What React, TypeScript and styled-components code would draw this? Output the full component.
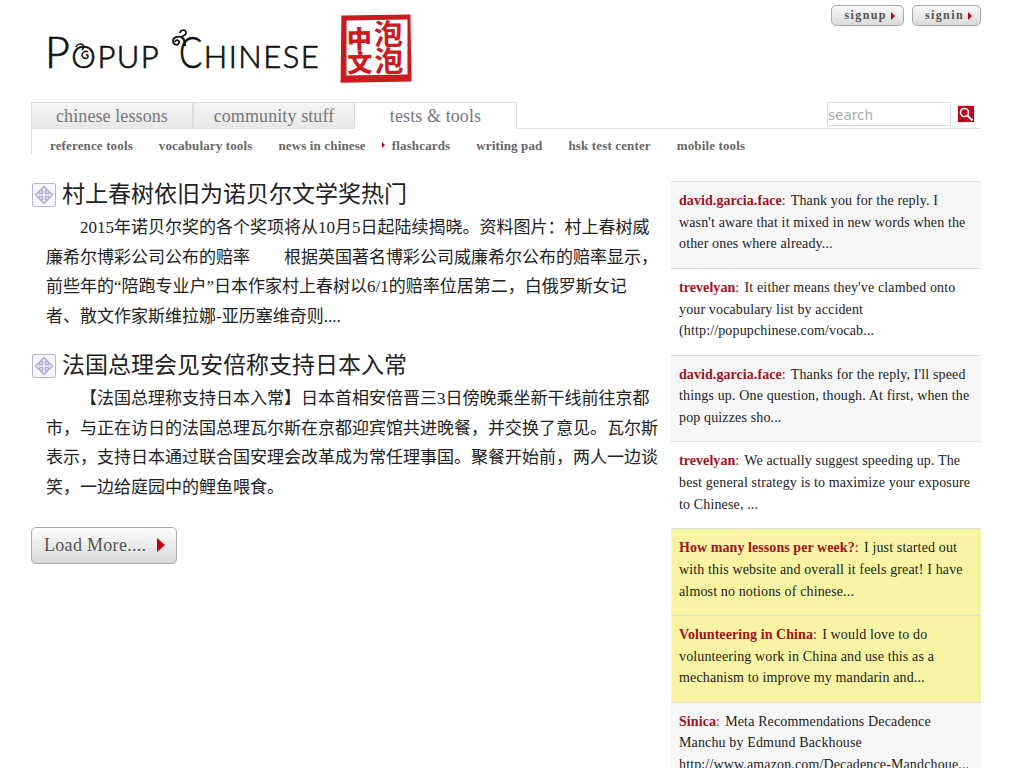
import React from "react";
import styled, { createGlobalStyle } from "styled-components";

const serif = `"Liberation Serif", "Noto Sans CJK SC", serif`;

const Global = createGlobalStyle`
  html, body { margin: 0; padding: 0; background: #fff; }
  body { font-family: ${serif}; color: #222; }
  * { box-sizing: border-box; }
  a { text-decoration: none; color: inherit; }
`;

const Page = styled.div`
  width: 950px;
  margin-left: 31px;
`;

const Header = styled.header`
  height: 102px;
  display: flex;
  justify-content: space-between;
  align-items: flex-start;
`;

const Logo = styled.div`
  display: flex;
  align-items: flex-start;
  padding: 14px 0 0 14px;
`;

const Wordmark = styled.div`
  position: relative;
  width: 295px;
  height: 68px;
  padding-top: 18px;
  font-family: "Lato", "Liberation Sans", sans-serif;
  font-weight: 300;
  font-size: 31px;
  line-height: 40px;
  letter-spacing: 1.5px;
  color: #111;
  white-space: nowrap;
  -webkit-text-stroke: 0.7px #111;
`;

const BigLetter = styled.span`
  font-size: 43px;
`;

const NarrowLetter = styled.span`
  display: inline-block;
  font-size: 43px;
  margin-left: 13px;
  transform: scaleX(0.8);
  transform-origin: right center;
`;

const Swirl = styled.svg`
  position: absolute;
  left: 127px;
  top: 14px;
`;

const OSwirl = styled.svg`
  position: absolute;
  left: 28px;
  top: 26px;
`;

const AuthRow = styled.div`
  display: flex;
  gap: 8px;
  padding-top: 5px;
`;

const AuthButton = styled.a`
  height: 21px;
  padding: 0 8px 0 12px;
  display: flex;
  align-items: center;
  gap: 4px;
  border: 1px solid #aaa;
  border-radius: 5px;
  background: linear-gradient(#fafafa, #d9d9d9);
  font-size: 12px;
  font-weight: bold;
  letter-spacing: 1.4px;
  color: #555;
`;

const Arrow = styled.i<{ $h?: number }>`
  display: inline-block;
  width: 0;
  height: 0;
  border-style: solid;
  border-color: transparent transparent transparent #c00018;
  border-width: ${(p) => (p.$h ?? 8) / 2}px 0 ${(p) => (p.$h ?? 8) / 2}px ${(p) => ((p.$h ?? 8) * 5) / 9}px;
`;

const NavBar = styled.div`
  display: flex;
  justify-content: space-between;
  align-items: flex-start;
  height: 27px;
  border-bottom: 1px solid #ddd;
`;

const Tabs = styled.nav`
  display: flex;
`;

const Tab = styled.a<{ $active?: boolean }>`
  width: 162px;
  height: 27px;
  padding-top: 2px;
  display: flex;
  align-items: center;
  justify-content: center;
  border: 1px solid #ddd;
  border-left-width: ${(p) => (p.$active ? 0 : 1)}px;
  border-bottom-color: ${(p) => (p.$active ? "#fff" : "#ddd")};
  background: ${(p) => (p.$active ? "#fff" : "linear-gradient(#f4f4f4, #e9e9e9)")};
  font-size: 18px;
  letter-spacing: 0.1px;
  color: #777;
  &:first-child { border-left-width: 1px; }
`;

const SearchBox = styled.form`
  display: flex;
  align-items: flex-start;
  gap: 6px;
  margin-right: 6px;
`;

const SearchInput = styled.input`
  width: 124px;
  height: 24px;
  padding: 2px 0 0;
  border: 1px solid #ddd;
  outline: none;
  font-family: "DejaVu Sans", sans-serif;
  font-size: 13.6px;
  &::placeholder { color: #aaa; opacity: 1; }
`;

const SearchButton = styled.button`
  width: 18px;
  height: 18px;
  margin-top: 3px;
  padding: 0;
  border: 1px solid #e4e4e4;
  display: flex;
  background: #c3001d;
`;

const SubNav = styled.nav`
  height: 25px;
  display: flex;
  align-items: flex-start;
  gap: 26px;
  padding: 9px 0 0 18px;
  border-left: 1px solid #ddd;
  font-size: 13px;
  line-height: 15px;
  font-weight: bold;
  letter-spacing: 0.14px;
  color: #666;
`;

const SubItem = styled.a`
  position: relative;
  & > i {
    position: absolute;
    left: -10px;
    top: 4px;
  }
`;

const Columns = styled.div`
  display: flex;
  justify-content: space-between;
  align-items: flex-start;
  margin-top: 27px;
`;

const Main = styled.main`
  width: 628px;
`;

const Article = styled.article`
  margin-bottom: 20px;
`;

const ArticleTitle = styled.h2`
  margin: 0;
  height: 26px;
  display: flex;
  align-items: center;
  gap: 6px;
  padding-left: 1px;
  font-family: "Noto Sans CJK SC", sans-serif;
  font-weight: 400;
  font-size: 23px;
  line-height: 26px;
  color: #222;
`;

const TitleText = styled.span`
  padding-bottom: 4px;
`;

const TitleIcon = styled.svg`
  flex: none;
  margin-top: 2px;
`;

const ArticleBody = styled.p`
  margin: 6px 0 0 15px;
  text-indent: 2em;
  font-size: 17px;
  line-height: 29.7px;
  color: #222;
`;

const LoadMore = styled.a`
  width: 146px;
  height: 37px;
  margin-top: 24px;
  display: flex;
  align-items: center;
  gap: 11px;
  padding-left: 12px;
  border: 1px solid #aaa;
  border-radius: 5px;
  background: linear-gradient(#fdfdfd, #d8d8d8);
  font-size: 18px;
  letter-spacing: 0.3px;
  color: #555;
  white-space: nowrap;
`;

const Sidebar = styled.aside`
  width: 310px;
`;

const Note = styled.div<{ $tone: "grey" | "white" | "yellow" }>`
  height: 86.8px;
  padding: 8px 8px 0;
  border-top: 1px solid #ddd;
  background: ${(p) => ({ grey: "#f7f7f7", white: "#fff", yellow: "#f7f5a3" }[p.$tone])};
  font-size: 14px;
  line-height: 21.7px;
  letter-spacing: 0.14px;
  color: #222;
  &:last-child { height: auto; }
`;

const NoteName = styled.a`
  font-weight: bold;
  letter-spacing: 0.07px;
  color: #a3101c;
`;

const Colon = styled.span`
  margin-right: 1.5px;
  color: #8a1a22;
`;

const ArrowIcon = () => (
  <TitleIcon width="24" height="24" viewBox="0 0 24 24">
    <rect x="0.5" y="0.5" width="23" height="23" rx="1.5" fill="#f8f7fc" stroke="#b9b3d8" />
    <path
      d="M12 3.5L16 7.5H13.5V10.5H16.5V8L20.5 12L16.5 16V13.5H13.5V16.5H16L12 20.5L8 16.5H10.5V13.5H7.5V16L3.5 12L7.5 8V10.5H10.5V7.5H8Z"
      fill="#eeecf7"
      stroke="#b5afd6"
      strokeWidth="1.5"
      strokeLinejoin="round"
    />
  </TitleIcon>
);

const Seal = () => (
  <svg width="74" height="71" viewBox="0 0 74 71">
    <g transform="rotate(-1 37 35)" fill="#cb1a20">
      <path fillRule="evenodd" d="M2 1h69v67H0zM7 6l-1 55h61l1-55z" />
      <text x="7" y="34" fontFamily="Noto Sans CJK SC" fontWeight="900" fontSize="25">中</text>
      <text x="7" y="58" fontFamily="Noto Sans CJK SC" fontWeight="900" fontSize="25">文</text>
      <text x="34" y="31" fontFamily="Noto Sans CJK SC" fontWeight="700" fontSize="29">泡</text>
      <text x="34" y="58" fontFamily="Noto Sans CJK SC" fontWeight="700" fontSize="29">泡</text>
    </g>
  </svg>
);

const articles = [
  {
    title: "村上春树依旧为诺贝尔文学奖热门",
    body: "2015年诺贝尔奖的各个奖项将从10月5日起陆续揭晓。资料图片：村上春树威廉希尔博彩公司公布的赔率\u3000\u3000根据英国著名博彩公司威廉希尔公布的赔率显示，前些年的“陪跑专业户”日本作家村上春树以6/1的赔率位居第二，白俄罗斯女记者、散文作家斯维拉娜-亚历塞维奇则....",
  },
  {
    title: "法国总理会见安倍称支持日本入常",
    body: "【法国总理称支持日本入常】日本首相安倍晋三3日傍晚乘坐新干线前往京都市，与正在访日的法国总理瓦尔斯在京都迎宾馆共进晚餐，并交换了意见。瓦尔斯表示，支持日本通过联合国安理会改革成为常任理事国。聚餐开始前，两人一边谈笑，一边给庭园中的鲤鱼喂食。",
  },
];

const notes: { tone: "grey" | "white" | "yellow"; name: string; text: string }[] = [
  { tone: "grey", name: "david.garcia.face", text: "Thank you for the reply. I wasn't aware that it mixed in new words when the other ones where already..." },
  { tone: "white", name: "trevelyan", text: "It either means they've clambed onto your vocabulary list by accident (http://popupchinese.com/vocab..." },
  { tone: "grey", name: "david.garcia.face", text: "Thanks for the reply, I'll speed things up. One question, though. At first, when the pop quizzes sho..." },
  { tone: "white", name: "trevelyan", text: "We actually suggest speeding up. The best general strategy is to maximize your exposure to Chinese, ..." },
  { tone: "yellow", name: "How many lessons per week?", text: "I just started out with this website and overall it feels great! I have almost no notions of chinese..." },
  { tone: "yellow", name: "Volunteering in China", text: "I would love to do volunteering work in China and use this as a mechanism to improve my mandarin and..." },
  { tone: "grey", name: "Sinica", text: "Meta Recommendations Decadence Manchu by Edmund Backhouse http://www.amazon.com/Decadence-Mandchoue..." },
];

const subItems = ["reference tools", "vocabulary tools", "news in chinese", "flashcards", "writing pad", "hsk test center", "mobile tools"];

export default function App() {
  return (
    <Page>
      <Global />
      <Header>
        <Logo>
          <Wordmark>
            <BigLetter>P</BigLetter>OPUP<NarrowLetter>C</NarrowLetter>HINESE
            <OSwirl width="22" height="26" viewBox="0 0 22 26" fill="none" stroke="#111" strokeWidth="1.5">
              <path d="M3 7c1-3 5-4 7-2s0 4-1 5" />
              <path d="M13 15c2-1 3 2 1 3s-5 0-5-3 4-5 6-3" />
            </OSwirl>
            <Swirl width="20" height="26" viewBox="0 0 20 26" fill="none" stroke="#111" strokeWidth="1.7">
              <path d="M8 5c0-3 5-4 6-1s-3 4-5 5" />
              <path d="M9 9c-3-1-8 0-8 4s5 5 6 2-3-4-4-1" />
              <path d="M9 9c3 1 4 4 4 9" strokeWidth="2.2" />
            </Swirl>
          </Wordmark>
          <Seal />
        </Logo>
        <AuthRow>
          <AuthButton>signup <Arrow /></AuthButton>
          <AuthButton>signin <Arrow /></AuthButton>
        </AuthRow>
      </Header>
      <NavBar>
        <Tabs>
          <Tab>chinese lessons</Tab>
          <Tab>community stuff</Tab>
          <Tab $active>tests &amp; tools</Tab>
        </Tabs>
        <SearchBox onSubmit={(e) => e.preventDefault()}>
          <SearchInput placeholder="search" />
          <SearchButton aria-label="search">
            <svg width="16" height="16" viewBox="0 0 16 16" fill="none" stroke="#fff">
              <circle cx="6.5" cy="6.5" r="4" strokeWidth="1.6" />
              <path d="M9.5 9.5L14.5 14.5" strokeWidth="2.2" />
            </svg>
          </SearchButton>
        </SearchBox>
      </NavBar>
      <SubNav>
        {subItems.map((s) => (
          <SubItem key={s}>
            {s === "flashcards" && <Arrow $h={7} />}
            {s}
          </SubItem>
        ))}
      </SubNav>
      <Columns>
        <Main>
          {articles.map((a) => (
            <Article key={a.title}>
              <ArticleTitle><ArrowIcon /><TitleText>{a.title}</TitleText></ArticleTitle>
              <ArticleBody>{a.body}</ArticleBody>
            </Article>
          ))}
          <LoadMore>Load More.... <Arrow $h={15} /></LoadMore>
        </Main>
        <Sidebar>
          {notes.map((n, i) => (
            <Note key={i} $tone={n.tone}>
              <NoteName>{n.name}</NoteName><Colon>:</Colon> {n.text}
            </Note>
          ))}
        </Sidebar>
      </Columns>
    </Page>
  );
}
